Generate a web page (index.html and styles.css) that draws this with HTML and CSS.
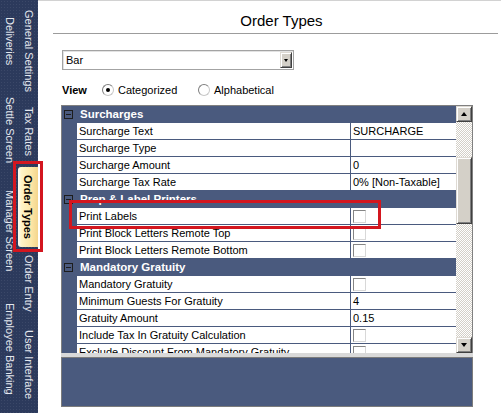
FILE: index.html
```html
<!DOCTYPE html>
<html>
<head>
<meta charset="utf-8">
<title>Order Types</title>
<link rel="stylesheet" href="styles.css">
</head>
<body>
<div class="app">
  <nav class="sidebar">
    <div class="tabcol tabcol-left">
      <div class="tab t-deliveries">Deliveries</div>
      <div class="tab t-settle">Settle Screen</div>
      <div class="tab t-manager">Manager Screen</div>
      <div class="tab t-banking">Employee Banking</div>
    </div>
    <div class="tabcol tabcol-right">
      <div class="tab t-general">General Settings</div>
      <div class="tab t-tax">Tax Rates</div>
      <div class="tab t-order active">Order Types</div>
      <div class="tab t-entry">Order Entry</div>
      <div class="tab t-ui">User Interface</div>
    </div>
  </nav>
  <main class="main">
    <header class="title">Order Types</header>
    <div class="content">
      <div class="select">
        <span class="select-text">Bar</span>
        <span class="btn select-btn"><span class="arrow-down small"></span></span>
      </div>
      <div class="view">
        <span class="view-label">View</span>
        <label class="opt opt-cat"><span class="radio checked"></span>Categorized</label>
        <label class="opt"><span class="radio"></span>Alphabetical</label>
      </div>
      <div class="grid">
        <div class="rows">
          <div class="cat"><span class="toggle"></span>Surcharges</div>
          <div class="row"><span class="gut"></span><span class="name">Surcharge Text</span><span class="val">SURCHARGE</span></div>
          <div class="row"><span class="gut"></span><span class="name">Surcharge Type</span><span class="val"></span></div>
          <div class="row"><span class="gut"></span><span class="name">Surcharge Amount</span><span class="val">0</span></div>
          <div class="row"><span class="gut"></span><span class="name">Surcharge Tax Rate</span><span class="val">0% [Non-Taxable]</span></div>
          <div class="cat"><span class="toggle"></span>Prep &amp; Label Printers</div>
          <div class="row"><span class="gut"></span><span class="name">Print Labels</span><span class="val"><span class="check"></span></span></div>
          <div class="row"><span class="gut"></span><span class="name">Print Block Letters Remote Top</span><span class="val"><span class="check"></span></span></div>
          <div class="row"><span class="gut"></span><span class="name">Print Block Letters Remote Bottom</span><span class="val"><span class="check"></span></span></div>
          <div class="cat"><span class="toggle"></span>Mandatory Gratuity</div>
          <div class="row"><span class="gut"></span><span class="name">Mandatory Gratuity</span><span class="val"><span class="check"></span></span></div>
          <div class="row"><span class="gut"></span><span class="name">Minimum Guests For Gratuity</span><span class="val">4</span></div>
          <div class="row"><span class="gut"></span><span class="name">Gratuity Amount</span><span class="val">0.15</span></div>
          <div class="row"><span class="gut"></span><span class="name">Include Tax In Gratuity Calculation</span><span class="val"><span class="check"></span></span></div>
          <div class="row"><span class="gut"></span><span class="name">Exclude Discount From Mandatory Gratuity</span><span class="val"><span class="check"></span></span></div>
        </div>
        <div class="scrollbar">
          <span class="btn sb-btn"><span class="arrow-up"></span></span>
          <span class="sb-track sb-track-top"></span>
          <span class="btn sb-thumb"></span>
          <span class="sb-track sb-track-bottom"></span>
          <span class="btn sb-btn"><span class="arrow-down"></span></span>
        </div>
      </div>
      <div class="splitter"></div>
      <div class="desc"></div>
    </div>
  </main>
</div>
<div class="mark mark-tab"></div>
<div class="mark mark-row"></div>
</body>
</html>
```
FILE: styles.css
```css
html, body {
  margin: 0;
  padding: 0;
}
body {
  width: 501px;
  height: 419px;
  overflow: hidden;
  position: relative;
  background: #fff;
  font-family: "Liberation Sans", Arial, sans-serif;
  font-size: 11px;
  color: #000;
}
.app {
  display: flex;
  align-items: flex-start;
}

/* Sidebar tabs */
.sidebar {
  width: 38px;
  height: 413px;
  flex: none;
  display: flex;
  background-color: #2c3a5c;
  background-image: radial-gradient(circle, rgba(255,255,255,0.07) 0.7px, transparent 0.9px);
  background-size: 3px 3px;
  color: #e3e6ee;
}
.tabcol {
  width: 19px;
  display: flex;
  flex-direction: column;
}
.tab {
  writing-mode: vertical-rl;
  width: 19px;
  line-height: 19px;
  box-sizing: border-box;
  white-space: nowrap;
  flex: none;
}
.t-deliveries { height: 85px; padding-top: 17px; }
.t-settle { height: 95px; padding-top: 12px; }
.t-manager { height: 110px; padding-top: 10px; }
.t-banking { height: 123px; padding-top: 13px; }
.t-general { height: 100px; padding-top: 10px; }
.t-tax { height: 67px; padding-top: 7px; }
.t-order { height: 80px; padding-top: 8px; }
.t-entry { height: 75px; padding-top: 8px; }
.t-ui { height: 91px; padding-top: 8px; }
.tab.active {
  font-weight: bold;
  color: #000;
  width: 20px;
  margin-left: -1px;
  line-height: 20px;
  border-radius: 3px 0 0 3px;
  background: linear-gradient(to right, #fffdf3 0, #fff3c6 18%, #fce7a8 65%, #f4d58c 100%);
}

/* Main area */
.main {
  flex: 1;
  min-width: 0;
  height: 418px;
  border-top: 1px solid #d2d2d2;
}
.title {
  margin: 0 3px 0 15px;
  height: 33px;
  box-sizing: border-box;
  padding: 11px 0 0 12px;
  text-align: center;
  font-size: 15px;
  line-height: 17px;
  border-bottom: 1px solid #9c9c9c;
}
.content {
  padding-left: 23px;
}

/* Dropdown */
.select {
  margin: 16px 0 0 1px;
  width: 232px;
  height: 20px;
  box-sizing: border-box;
  border: 1px solid #a3a3a3;
  box-shadow: inset 1px 1px 0 #e2e2e2;
  display: flex;
  align-items: center;
  justify-content: space-between;
  padding: 0 1px 0 3px;
  background: #fff;
}
.btn {
  display: flex;
  align-items: center;
  justify-content: center;
  box-sizing: border-box;
  background: #d4d0c8;
  border: 1px solid;
  border-color: #dedad3 #404040 #404040 #dedad3;
  box-shadow: inset 1px 1px 0 #fff, inset -1px -1px 0 #808080;
  flex: none;
}
.select-btn {
  width: 12px;
  height: 16px;
}
.arrow-down {
  width: 0;
  height: 0;
  border-left: 3px solid transparent;
  border-right: 3px solid transparent;
  border-top: 4px solid #000;
}
.arrow-down.small {
  border-left-width: 2.5px;
  border-right-width: 2.5px;
  border-top-width: 3px;
}
.arrow-up {
  width: 0;
  height: 0;
  border-left: 3.5px solid transparent;
  border-right: 3.5px solid transparent;
  border-bottom: 4px solid #000;
}

/* View options */
.view {
  margin: 12px 0 0 1px;
  height: 16px;
  display: flex;
  align-items: center;
}
.view-label {
  font-weight: bold;
  width: 40px;
}
.opt {
  display: flex;
  align-items: center;
}
.opt-cat {
  width: 96px;
}
.radio {
  width: 12px;
  height: 12px;
  box-sizing: border-box;
  border-radius: 50%;
  border: 1px solid;
  border-color: #7e7e7e #c8c8c8 #c8c8c8 #7e7e7e;
  background: #fff;
  margin-right: 4px;
  display: flex;
  align-items: center;
  justify-content: center;
}
.radio.checked::after {
  content: "";
  width: 4px;
  height: 4px;
  border-radius: 50%;
  background: #000;
}

/* Property grid */
.grid {
  margin-top: 7px;
  width: 410px;
  height: 247px;
  display: flex;
  border: 1px solid #808080;
  border-bottom: 0;
}
.rows {
  width: 394px;
  height: 247px;
  overflow: hidden;
  background: #4a5a7e;
  flex: none;
}
.cat {
  height: 16px;
  margin-bottom: 1px;
  display: flex;
  align-items: center;
  padding-left: 2px;
  color: #fff;
  font-weight: bold;
  font-size: 11.5px;
  white-space: nowrap;
}
.toggle {
  width: 9px;
  height: 9px;
  box-sizing: border-box;
  border: 1px solid #1d1d1d;
  position: relative;
  margin-right: 7px;
  flex: none;
}
.toggle::after {
  content: "";
  position: absolute;
  left: 1px;
  right: 1px;
  top: 3px;
  height: 1px;
  background: #1d1d1d;
}
.row {
  display: flex;
  height: 16px;
  margin-bottom: 1px;
}
.gut {
  width: 15px;
  flex: none;
}
.name, .val {
  background: #fff;
  line-height: 16px;
  padding-left: 2px;
  box-sizing: border-box;
  white-space: nowrap;
  overflow: hidden;
  flex: none;
  display: flex;
  align-items: center;
}
.name {
  width: 273px;
}
.val {
  width: 105px;
  margin-left: 1px;
}
.check {
  width: 13px;
  height: 13px;
  box-sizing: border-box;
  border: 1px solid;
  border-color: #858585 #d8d8d8 #d8d8d8 #858585;
  background: #fff;
}

/* Scrollbar */
.scrollbar {
  width: 16px;
  height: 247px;
  display: flex;
  flex-direction: column;
  flex: none;
}
.sb-btn {
  width: 16px;
  height: 16px;
}
.sb-track {
  background: repeating-conic-gradient(#d4d0c8 0 25%, #ffffff 0 50%) 0 0 / 2px 2px;
}
.sb-track-top {
  height: 35px;
}
.sb-thumb {
  width: 16px;
  height: 67px;
}
.sb-track-bottom {
  flex: 1;
}

.splitter {
  width: 412px;
  height: 4px;
  background: #d9d9d9;
}
.desc {
  width: 410px;
  height: 48px;
  border: 1px solid #7c7c7c;
  background: #4a5a7e;
}

/* Red highlight annotations drawn over the UI */
.mark {
  position: absolute;
  box-sizing: border-box;
  border: 3px solid #d3161f;
  pointer-events: none;
}
.mark-tab {
  left: 13px;
  top: 161px;
  width: 30px;
  height: 91px;
}
.mark-row {
  left: 69px;
  top: 200px;
  width: 312px;
  height: 29px;
}
```
